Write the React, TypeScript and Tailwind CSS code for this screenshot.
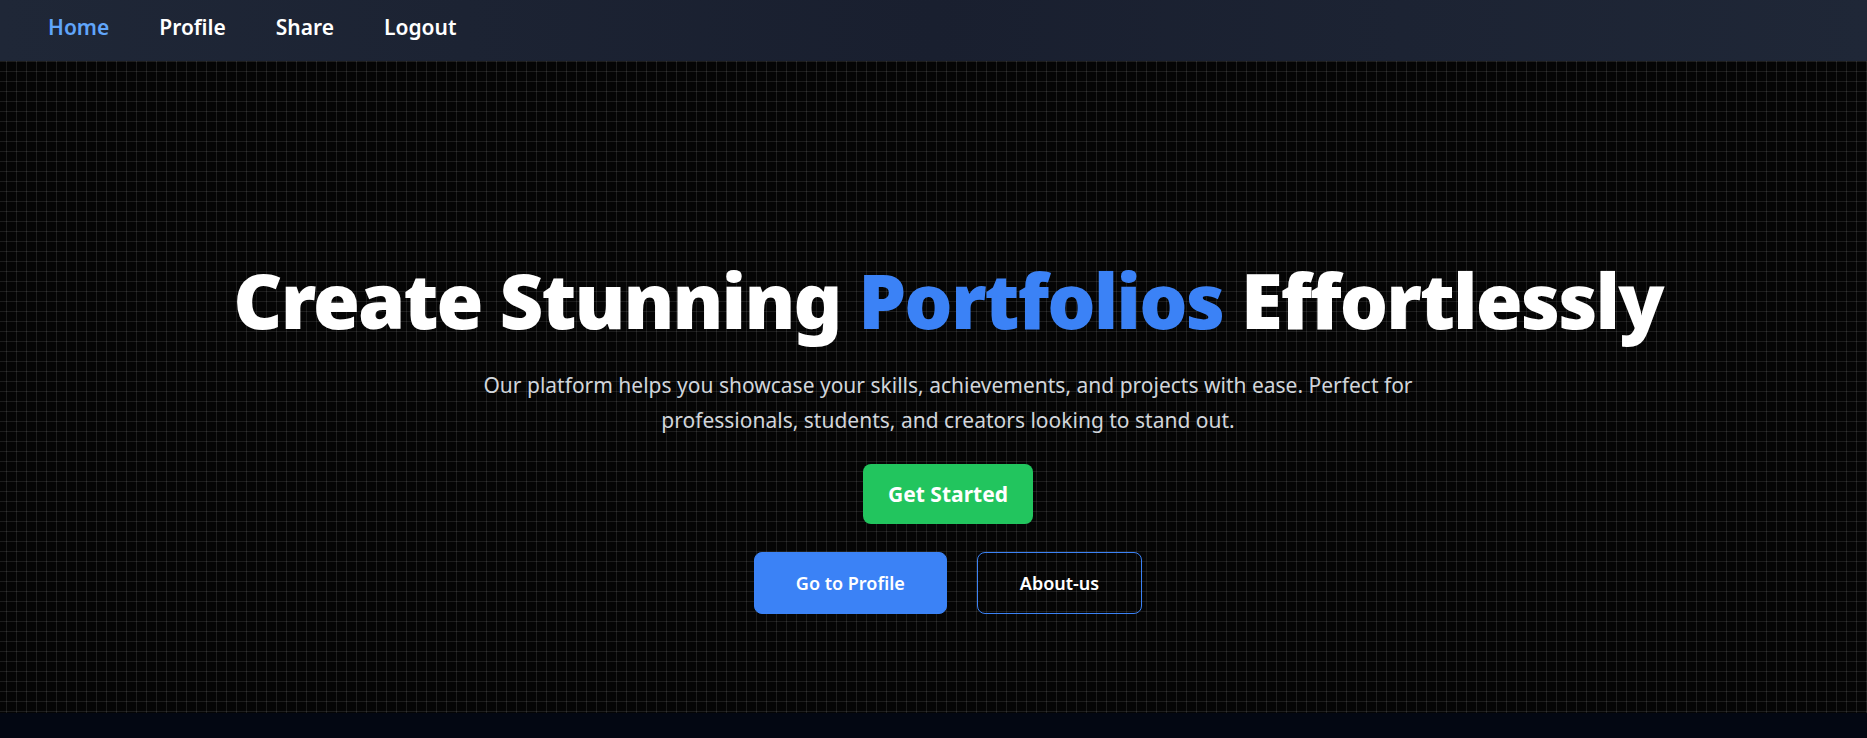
import React from "react";

export default function App() {
  return (
    <div className="min-h-screen bg-black text-white font-['Noto_Sans',sans-serif]">
      <nav className="h-[61px] flex items-center gap-[50px] px-12 pb-[6px] bg-gradient-to-r from-[#1f2737] via-[#191f2f] to-[#1f2737]">
        <a className="text-[21px] font-semibold text-[#60a5fa]">Home</a>
        <a className="text-[21px] font-semibold text-white">Profile</a>
        <a className="text-[21px] font-semibold text-white">Share</a>
        <a className="text-[21px] font-semibold text-white">Logout</a>
      </nav>
      <section className="h-[652px] bg-[#050505] bg-[linear-gradient(to_right,#ffffff18_1px,transparent_1px),linear-gradient(to_bottom,#ffffff18_1px,transparent_1px)] bg-[size:10px_10px] bg-[position:6px_0px] flex flex-col items-center pt-[191px] pl-[29px]">
        <h1 className="text-[76px] font-black leading-tight tracking-tight text-center">
          Create Stunning <span className="text-[#3b82f6]">Portfolios</span> Effortlessly
        </h1>
        <p className="mt-[21px] max-w-[980px] text-[21px] leading-[35px] text-[#d1d5db] text-center">
          Our platform helps you showcase your skills, achievements, and projects with ease. Perfect for professionals, students, and creators looking to stand out.
        </p>
        <button className="mt-[26px] px-[25px] py-4 rounded-lg bg-[#22c55e] text-[21px] leading-7 font-bold text-white">
          Get Started
        </button>
        <div className="mt-7 flex gap-[30px]">
          <button className="px-[41px] py-4 rounded-lg border border-[#3b82f6] bg-[#3b82f6] text-lg leading-7 font-semibold text-white">
            Go to Profile
          </button>
          <button className="px-[42px] py-4 rounded-lg border border-[#3b82f6] bg-transparent text-lg leading-7 font-semibold text-white">
            About-us
          </button>
        </div>
      </section>
      <footer className="h-[120px] bg-[#030712]"></footer>
    </div>
  );
}
